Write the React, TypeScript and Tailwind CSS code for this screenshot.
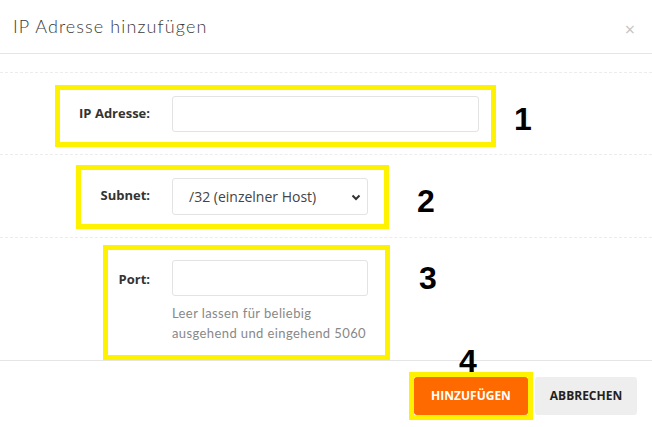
const Mark = ({ n, className }: { n: string; className: string }) => (
  <span
    className={`absolute text-[32px] font-bold leading-none text-black ${className}`}
    style={{ fontFamily: '"Liberation Sans", Arial, sans-serif' }}
  >
    {n}
  </span>
);

const App = () => {
  return (
    <div
      className="w-[652px] h-[427px] bg-white text-[#333] overflow-hidden"
      style={{ fontFamily: '"Open Sans", sans-serif' }}
    >
      {/* header */}
      <div className="flex items-center justify-between h-[54px] pl-[13px] pr-[17px] border-b border-[#e5e5e5]">
        <h4
          className="text-[18px] font-light text-[#3a3a3a] tracking-[1.1px]"
          style={{ fontFamily: 'Lato, "Noto Sans", sans-serif' }}
        >
          IP Adresse hinzufügen
        </h4>
        <span className="text-[18px] leading-none text-[#c4c4c4] mt-[5px]">×</span>
      </div>

      {/* body */}
      <div className="pt-[18px]">
        <div className="relative flex items-center h-[82px] border-t border-dashed border-[#ececec]">
          <label className="w-[150px] text-right text-[13px] font-bold">IP Adresse:</label>
          <input className="ml-[22px] w-[307px] h-[36px] border border-[#e3e3e3] rounded-[3px]" />
          <div className="absolute left-[55px] top-[12px] w-[441px] h-[62px] border-[5px] border-[#fff200]" />
          <Mark n="1" className="left-[514px] top-[30px]" />
        </div>

        <div className="relative flex items-center h-[83px] border-t border-dashed border-[#ececec]">
          <label className="w-[150px] text-right text-[13px] font-bold">Subnet:</label>
          <div className="relative ml-[22px] w-[196px] h-[37px] border border-[#e3e3e3] rounded-[3px] flex items-center pl-[16px]">
            <span className="text-[14px] text-[#444]">/32 (einzelner Host)</span>
            <svg className="absolute right-[6px] top-[15px]" width="10" height="7" viewBox="0 0 10 7">
              <path d="M1.5 1.5 L5 5 L8.5 1.5" fill="none" stroke="#333" strokeWidth="2" />
            </svg>
          </div>
          <div className="absolute left-[76px] top-[10px] w-[313px] h-[64px] border-[5px] border-[#fff200]" />
          <Mark n="2" className="left-[417px] top-[30px]" />
        </div>

        <div className="relative flex items-start h-[123px] pt-[22px] border-t border-dashed border-[#ececec]">
          <label className="w-[150px] text-right text-[13px] font-bold mt-[10px]">Port:</label>
          <div className="ml-[22px] w-[196px]">
            <input className="w-[196px] h-[36px] border border-[#e3e3e3] rounded-[3px]" />
            <p
              className="mt-[7px] text-[13px] leading-[20px] text-[#888] tracking-[0.4px] whitespace-nowrap"
              style={{ fontFamily: 'Lato, "Noto Sans", sans-serif' }}
            >
              Leer lassen für beliebig
              <br />
              ausgehend und eingehend 5060
            </p>
          </div>
          <div className="absolute left-[103px] top-[7px] w-[287px] h-[115px] border-[5px] border-[#fff200]" />
          <Mark n="3" className="left-[419px] top-[24px]" />
        </div>
      </div>

      {/* footer */}
      <div className="relative flex justify-end gap-[7px] pt-[16px] pr-[15px] border-t border-[#e5e5e5]">
        <button className="w-[114px] h-[38px] bg-[#ff6a00] text-white text-[12px] font-bold rounded-[3px]">
          HINZUFÜGEN
        </button>
        <button className="w-[102px] h-[38px] bg-[#eeeeee] text-[#222] text-[12px] font-bold rounded-[3px]">
          ABBRECHEN
        </button>
        <div className="absolute left-[409px] top-[11px] w-[124px] h-[48px] border-[5px] border-[#fff200]" />
        <Mark n="4" className="left-[459px] top-[-16px]" />
      </div>
    </div>
  );
};

export default App;
